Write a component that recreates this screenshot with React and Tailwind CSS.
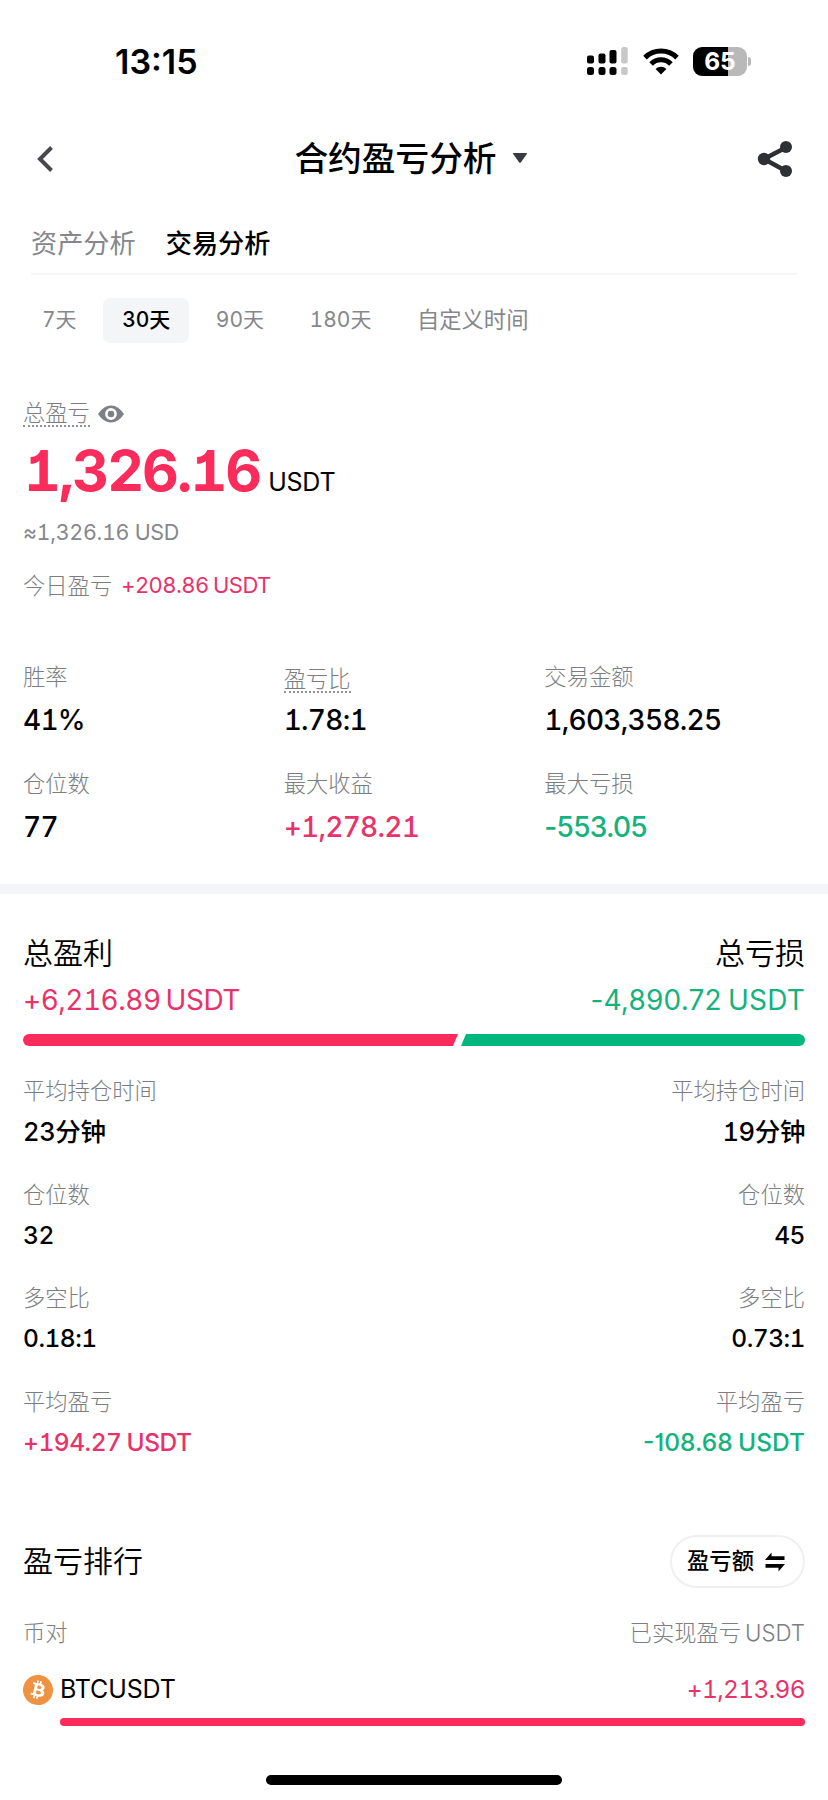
import { SiBitcoin } from "react-icons/si";

const ranges = ["7天", "30天", "90天", "180天", "自定义时间"];

const stats = [
  { label: "胜率", value: "41%" },
  { label: "盈亏比", value: "1.78:1", hint: true },
  { label: "交易金额", value: "1,603,358.25" },
  { label: "仓位数", value: "77" },
  { label: "最大收益", value: "+1,278.21", color: "text-[#e8336a]" },
  { label: "最大亏损", value: "-553.05", color: "text-[#14b27c] proportional-nums" },
];

const comparison = [
  { label: "平均持仓时间", profit: "23分钟", loss: "19分钟", size: "text-[25.5px] tracking-[-0.015em]" },
  { label: "仓位数", profit: "32", loss: "45" },
  { label: "多空比", profit: "0.18:1", loss: "0.73:1" },
  { label: "平均盈亏", profit: "+194.27 USDT", loss: "-108.68 USDT", colored: true },
];

const StatusBar = () => (
  <div className="flex h-[122px] items-center pl-[115px] pr-[77px]">
    <div className="pt-[2px] text-[34px] leading-none font-semibold">13:15</div>

    <svg className="ml-auto" width="43" height="30" viewBox="0 0 43 30">
      <g fill="#000">
        <rect x="1" y="9.5" width="7" height="8" rx="2" />
        <rect x="12.5" y="7.5" width="7" height="10" rx="2" />
        <rect x="23.5" y="4" width="7" height="13.5" rx="2" />
        <rect x="1" y="21" width="7" height="8" rx="2.5" />
        <rect x="12.5" y="21" width="7" height="8" rx="2.5" />
        <rect x="23.5" y="21" width="7" height="8" rx="2.5" />
      </g>
      <g fill="#c8c8c8">
        <rect x="35.2" y="1" width="6.5" height="16.5" rx="2" />
        <rect x="35.2" y="21" width="6.5" height="8" rx="2" />
      </g>
    </svg>

    <svg className="ml-[14px]" width="36" height="28" viewBox="0 0 36 28">
      <g fill="none" stroke="#000" strokeWidth="5">
        <path d="M2 10.6a22.8 22.8 0 0 1 32 0" />
        <path d="M8.1 16.9a14 14 0 0 1 19.8 0" />
      </g>
      <path d="M18 27.4l-5.4-5.4a7.7 7.7 0 0 1 10.8 0z" fill="#000" />
    </svg>

    <div className="ml-[14px] flex h-[29px] w-[54px] items-center justify-center rounded-[9px] bg-linear-to-r from-black from-65% to-[#b9b9b9] to-65% pt-[1px] text-[24.5px] leading-none font-bold text-white">
      65
    </div>
    <div className="ml-[1px] h-[9px] w-[3px] rounded-r-full bg-[#b9b9b9]" />
  </div>
);

const Header = () => (
  <div className="flex h-[73px] items-center justify-between pl-[37px] pr-[35px]">
    <svg width="28" height="28" viewBox="0 0 28 28">
      <path d="M14.5 2.5L3 14l11.5 11.5" fill="none" stroke="#47484c" strokeWidth="4" />
    </svg>
    <div className="flex items-center gap-[15px]">
      <h1 className="text-[33.7px] leading-none font-medium">合约盈亏分析</h1>
      <svg width="16" height="12" viewBox="0 0 16 12">
        <path d="M1.6 1h12.8q1.2 0 .4 1L9 10.2q-1 1.2-2 0L1.2 2q-.8-1 .4-1z" fill="#3a3b3f" />
      </svg>
    </div>
    <svg width="36" height="38" viewBox="0 0 36 38">
      <path d="M29 7.5L7 19l22 12" fill="none" stroke="#2f3034" strokeWidth="4.5" />
      <g fill="#2f3034">
        <circle cx="29" cy="7" r="6" />
        <circle cx="7" cy="19" r="6.2" />
        <circle cx="29" cy="31" r="6" />
      </g>
    </svg>
  </div>
);

const Tabs = () => (
  <div className="mx-[31px] flex h-[80px] items-center gap-[30px] border-b-2 border-[#f4f5f6] pt-[21px] text-[26.2px] leading-none">
    <span className="text-[#85878c]">资产分析</span>
    <span className="font-medium">交易分析</span>
  </div>
);

const RangePicker = () => (
  <div className="mt-[23px] flex h-[45px] gap-[7.5px] pl-[23px] text-[21px] leading-[44px] text-[#85878c]">
    {ranges.map((range) => (
      <div
        key={range}
        className={
          range === "30天"
            ? "rounded-[7px] bg-[#f3f5f7] px-[19px] font-medium text-black"
            : "px-[19px] last:text-[22.3px]"
        }
      >
        {range}
      </div>
    ))}
  </div>
);

const Summary = () => (
  <div className="px-[23px]">
    <div className="mt-[58px] flex h-[26px] items-center gap-[8px]">
      <span className="border-b-2 border-dotted border-[#909297] text-[22.3px] leading-[24px] font-light text-[#7b7d82]">
        总盈亏
      </span>
      <svg width="26" height="18" viewBox="0 0 26 18">
        <path d="M0 9Q5.5 .5 13 .5T26 9Q20.5 17.5 13 17.5T0 9z" fill="#7e8085" />
        <circle cx="13" cy="9" r="4.6" fill="#7e8085" stroke="#fff" strokeWidth="2.6" />
      </svg>
    </div>

    <div className="flex h-[86px] items-baseline gap-[8px] pl-[1px] leading-[88px]">
      <span className="text-[57px] font-bold tracking-[-0.034em] text-[#fb2b5c]">1,326.16</span>
      <span className="text-[25px] tracking-[-0.01em]">USDT</span>
    </div>

    <div className="h-[39px] text-[21.5px] leading-[39px] tracking-[-0.015em] text-[#85878c]">
      ≈1,326.16 USD
    </div>
    <div className="flex h-[68px] items-center gap-[9px] text-[22px] leading-none">
      <span className="text-[22.3px] font-light text-[#7b7d82]">今日盈亏</span>
      <span className="pb-[2px] tracking-[-0.026em] text-[#e8336a] [word-spacing:-1px]">
        +208.86 USDT
      </span>
    </div>
  </div>
);

const StatGrid = () => (
  <div className="mt-[41px] grid grid-cols-3 gap-y-[21px] px-[23px]">
    {stats.map(({ label, value, color, hint }) => (
      <div key={label}>
        <div className="h-[32px] text-[22.3px] leading-[32px] font-light text-[#7b7d82]">
          {hint ? (
            <div className="pt-[6px]">
              <span className="block w-fit border-b-2 border-dotted border-[#909297] leading-[24px]">
                {label}
              </span>
            </div>
          ) : (
            label
          )}
        </div>
        <div className={`text-[28px] leading-[54px] font-medium tracking-[-0.026em] ${color || "text-black"}`}>
          {value}
        </div>
      </div>
    ))}
  </div>
);

const Comparison = () => (
  <div className="mt-[39px] px-[23px]">
    <div className="flex justify-between text-[30px] leading-[40px] font-[350]">
      <span>总盈利</span>
      <span>总亏损</span>
    </div>
    <div className="flex justify-between text-[28px] leading-[54px] [word-spacing:-2px]">
      <span className="tracking-[-0.018em] text-[#e8336a]">+6,216.89 USDT</span>
      <span className="tracking-[0.007em] text-[#14b27c] proportional-nums">-4,890.72 USDT</span>
    </div>

    <div className="mt-[7px] flex h-[12px] gap-[4px]">
      <div className="w-[435px] rounded-l-full bg-[#fb2b5c] [clip-path:polygon(0_0,100%_0,calc(100%-5px)_100%,0_100%)]" />
      <div className="-ml-[5px] flex-1 rounded-r-full bg-[#00b87c] [clip-path:polygon(9px_0,100%_0,100%_100%,4px_100%)]" />
    </div>

    <div className="mt-[29px] flex flex-col gap-[21.5px]">
      {comparison.map(({ label, profit, loss, colored, size }) => (
        <div key={label}>
          <div className="flex justify-between text-[22.3px] leading-[32px] font-light text-[#7b7d82]">
            <span>{label}</span>
            <span>{label}</span>
          </div>
          <div
            className={`flex h-[50px] justify-between font-medium [word-spacing:-1px] ${
              size ? `leading-[50px] ${size}` : "text-[24.5px] leading-[48px] tracking-[-0.02em]"
            }`}
          >
            <span className={colored ? "text-[#e8336a]" : ""}>{profit}</span>
            <span className={colored ? "tracking-[0] text-[#14b27c] proportional-nums" : ""}>{loss}</span>
          </div>
        </div>
      ))}
    </div>
  </div>
);

const Ranking = () => (
  <div className="mt-[67.5px] px-[23px]">
    <div className="flex h-[53px] items-center justify-between">
      <h2 className="pb-[2px] text-[30px] leading-none font-[350]">盈亏排行</h2>
      <button className="flex h-[53px] w-[135px] items-center justify-center gap-[11px] rounded-full border-2 border-[#eff0f1] pr-[3px] text-[22.3px] leading-none font-medium">
        盈亏额
        <svg width="20" height="20" viewBox="0 0 20 20">
          <path d="M0 8L6.5 .5V4.200H19.5V8zM20 12L13.5 19.5V15.800H.5V12z" fill="#000" />
        </svg>
      </button>
    </div>

    <div className="mt-[29px] flex justify-between text-[22.3px] leading-[32px] font-light text-[#7b7d82]">
      <span>币对</span>
      <span className="[word-spacing:-2px]">已实现盈亏 USDT</span>
    </div>

    <div className="mt-[26px] flex h-[30px] items-center text-[25px] leading-none">
      <SiBitcoin className="h-[30px] w-[30px] text-[#ef9242]" />
      <span className="mb-[2px] ml-[7px] tracking-[-0.005em]">BTCUSDT</span>
      <span className="mb-[2px] ml-auto text-[24.5px] tracking-[-0.028em] text-[#e8336a]">+1,213.96</span>
    </div>
    <div className="mt-[13px] ml-[37px] h-[8px] rounded-full bg-[#fb2b5c]" />
  </div>
);

const App = () => (
  <div className="h-[1800px] w-[828px] overflow-hidden bg-white font-[Inter,'Noto_Sans_CJK_SC',sans-serif] text-black">
    <StatusBar />
    <Header />
    {/* cv01 gives figures a footed "1" */}
    <main className="tabular-nums [font-feature-settings:'cv01']">
      <Tabs />
      <RangePicker />
      <Summary />
      <StatGrid />
      <div className="mt-[30px] h-[10px] bg-[#f4f5f8]" />
      <Comparison />
      <Ranking />
    </main>
    {/* Home indicator */}
    <div className="mx-auto mt-[49px] h-[10px] w-[296px] rounded-full bg-black" />
  </div>
);

export default App;
